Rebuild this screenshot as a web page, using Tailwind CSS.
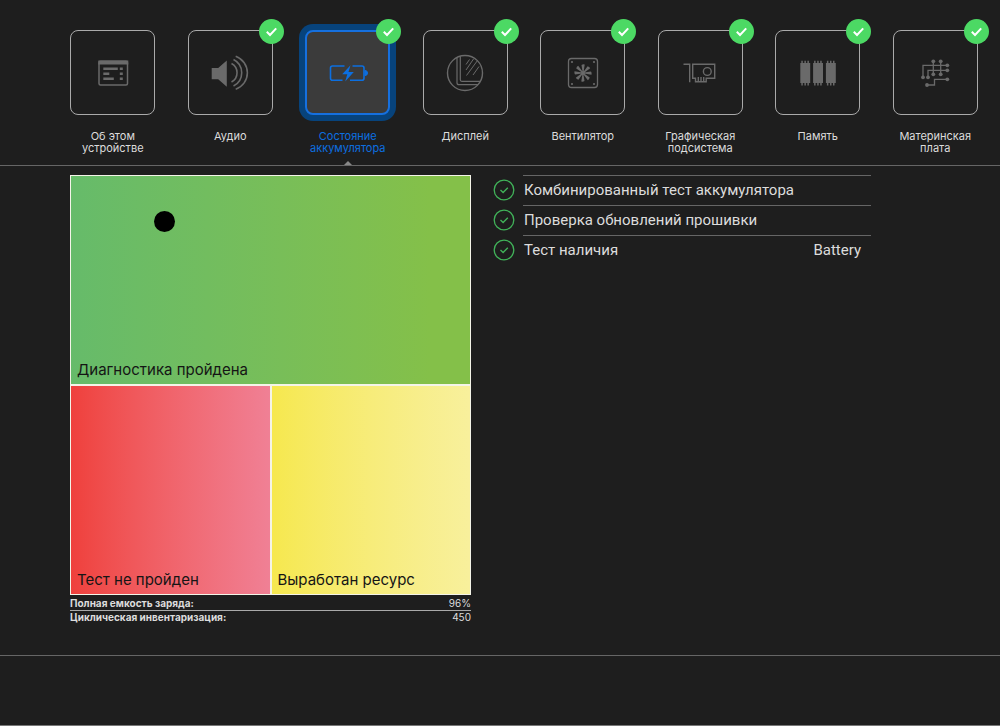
<!DOCTYPE html>
<html lang="ru">
<head>
<meta charset="utf-8">
<meta name="viewport" content="width=device-width, initial-scale=1">
<title>Состояние аккумулятора</title>
<script src="https://cdn.jsdelivr.net/npm/@tailwindcss/browser@4"></script>
</head>
<body class="min-h-screen flex flex-col bg-[#1e1e1e] text-[#dcdcdc] font-['Inter','Noto_Sans',sans-serif] border-b border-[#777]">
<svg class="hidden" aria-hidden="true">
  <symbol id="badge" viewBox="0 0 25 25"><circle cx="12.500" cy="12.500" r="12.500" fill="#4cd964"/><path d="M7.800 12.800l3.200 3.200 6.200-6.600" fill="none" stroke="#fff" stroke-width="2"/></symbol>
  <symbol id="ok" viewBox="0 0 22 22"><circle cx="11" cy="11" r="9.800" fill="none" stroke="#41b259" stroke-width="1.300"/><path d="M7.500 11l2.600 2.500 4.700-4.700" fill="none" stroke="#41b259" stroke-width="1.400"/></symbol>
</svg>

<nav class="flex pl-[54px] pr-[6px] pt-[30px] h-[166px] border-b border-[#666] text-[11px] leading-3 text-center" aria-label="Компоненты">
  <button class="flex-1 flex flex-col items-center">
    <span class="relative size-[85px] shrink-0 rounded-lg border border-[#aaa] flex items-center justify-center text-[#6a6a6a]">
      <svg class="size-10" viewBox="0 0 40 40" fill="none" stroke="currentColor" stroke-width="1.500"><rect x="6" y="8.200" width="28.500" height="23.800" rx="1.500"/><path d="M5.300 7.500h30v4h-30z" fill="currentColor" stroke="none"/><path d="M10.300 15.700h14.500M10.300 20.700h6M10.300 25.700h10.500M26.800 15.700h3M26.800 20.700h3M26.800 25.700h3" stroke-width="2.400"/></svg>
    </span>
    <span class="mt-[15px]">Об этом<br>устройстве</span>
  </button>
  <button class="flex-1 flex flex-col items-center">
    <span class="relative size-[85px] shrink-0 rounded-lg border border-[#aaa] flex items-center justify-center text-[#6a6a6a]">
      <svg class="size-10" viewBox="0 0 40 40" fill="none" stroke="currentColor" stroke-width="1.600"><path d="M1.700 15h6.500l8.600-7.500v26.300l-8.600-7.600H1.700z" fill="currentColor" stroke="none"/><path d="M21.500 10.500a10.500 10.500 0 0 1 0 18.500M23.500 6.500a14.800 14.800 0 0 1 0 26.500M25.700 3.300a17.500 17.500 0 0 1 0 33"/></svg>
      <svg class="absolute -top-3 -right-3 size-[25px]"><use href="#badge"/></svg>
    </span>
    <span class="mt-[15px]">Аудио</span>
  </button>
  <button class="relative flex-1 flex flex-col items-center text-[#0c6fe0]" aria-current="page">
    <span class="relative size-[85px] shrink-0 rounded-lg border-2 border-[#1670df] bg-[#3b3b3b] ring-6 ring-[#07437c] flex items-center justify-center">
      <svg class="size-10" viewBox="0 0 40 40" fill="none" stroke="currentColor" stroke-width="1.600"><path d="M16.500 13H4.500a2 2 0 0 0-2 2v10.300a2 2 0 0 0 2 2h10M24.500 13H34a2 2 0 0 1 2 2v10.300a2 2 0 0 1-2 2H22"/><path d="M37 17.500a2.500 2.500 0 0 1 0 5z" fill="currentColor" stroke-width="1"/><path d="M22.500 12.300l-8.300 9h5.100l-2.100 7.200 8.600-9.500h-5.300z" fill="currentColor" stroke="none"/></svg>
      <svg class="absolute -top-[13px] -right-[13px] size-[25px]"><use href="#badge"/></svg>
    </span>
    <span class="mt-[15px]">Состояние<br>аккумулятора</span>
    <svg class="absolute bottom-0 w-2 h-1" viewBox="0 0 8 4"><path d="M0 4l4-4 4 4z" fill="#888"/></svg>
  </button>
  <button class="flex-1 flex flex-col items-center">
    <span class="relative size-[85px] shrink-0 rounded-lg border border-[#aaa] flex items-center justify-center text-[#6a6a6a]">
      <svg class="size-10" viewBox="0 0 40 40" fill="none" stroke="currentColor" stroke-width="1.400"><circle cx="20" cy="20" r="17.500"/><path d="M12 4.500v25.200a2 2 0 0 0 2 2h19M15.300 3.500v23.300a1.500 1.500 0 0 0 1.500 1.500H35.500" stroke-width="1.200"/><path d="M21 11.500l3.500-5M21 17l7.500-11M21.500 22.500l11-15M28 22l6-8.500" stroke-width="1"/></svg>
      <svg class="absolute -top-3 -right-3 size-[25px]"><use href="#badge"/></svg>
    </span>
    <span class="mt-[15px]">Дисплей</span>
  </button>
  <button class="flex-1 flex flex-col items-center">
    <span class="relative size-[85px] shrink-0 rounded-lg border border-[#aaa] flex items-center justify-center text-[#6a6a6a]">
      <svg class="size-10" viewBox="0 0 40 40" fill="none" stroke="currentColor" stroke-width="1.300"><rect x="5.500" y="5.500" width="29" height="29" rx="3"/><g fill="currentColor" stroke="none"><circle cx="9" cy="9" r="1.100"/><circle cx="31" cy="9" r="1.100"/><circle cx="9" cy="31" r="1.100"/><circle cx="31" cy="31" r="1.100"/><circle cx="20" cy="20" r="2"/><path id="blade" d="M19.600 19l-1.100-7q1.500-1 3.200-.5L20.600 19z"/><use href="#blade" transform="rotate(45 20 20)"/><use href="#blade" transform="rotate(90 20 20)"/><use href="#blade" transform="rotate(135 20 20)"/><use href="#blade" transform="rotate(180 20 20)"/><use href="#blade" transform="rotate(225 20 20)"/><use href="#blade" transform="rotate(270 20 20)"/><use href="#blade" transform="rotate(315 20 20)"/></g></svg>
      <svg class="absolute -top-3 -right-3 size-[25px]"><use href="#badge"/></svg>
    </span>
    <span class="mt-[15px]">Вентилятор</span>
  </button>
  <button class="flex-1 flex flex-col items-center">
    <span class="relative size-[85px] shrink-0 rounded-lg border border-[#aaa] flex items-center justify-center text-[#6a6a6a]">
      <svg class="size-10" viewBox="0 0 40 40" fill="none" stroke="currentColor" stroke-width="1.400"><path d="M3.500 11.300h6.200v18M12.700 11.300h22v14h-8.500v3.500H15.500v-3.500h-2.800zM18.300 24v4.500M21 24v4.500M23.700 24v4.500"/><circle cx="27.300" cy="18.500" r="3.900"/></svg>
      <svg class="absolute -top-3 -right-3 size-[25px]"><use href="#badge"/></svg>
    </span>
    <span class="mt-[15px]">Графическая<br>подсистема</span>
  </button>
  <button class="flex-1 flex flex-col items-center">
    <span class="relative size-[85px] shrink-0 rounded-lg border border-[#aaa] flex items-center justify-center text-[#6a6a6a]">
      <svg class="size-10" viewBox="0 0 40 40" fill="currentColor"><path id="ram" d="M2.300 10h1V7.700h1.500V10h1.600V7.700h1.500V10h1.500V7.700h1.500V10h1.300v20h-1.300v2.500H9.400V30H7.900v2.500H6.400V30H4.800v2.500H3.300V30h-1z"/><use href="#ram" x="12.800"/><use href="#ram" x="25.600"/></svg>
      <svg class="absolute -top-3 -right-3 size-[25px]"><use href="#badge"/></svg>
    </span>
    <span class="mt-[15px]">Память</span>
  </button>
  <button class="flex-1 flex flex-col items-center">
    <span class="relative size-[85px] shrink-0 rounded-lg border border-[#aaa] flex items-center justify-center text-[#6a6a6a]">
      <svg class="size-10" viewBox="0 0 40 40" fill="none" stroke="currentColor" stroke-width="1.300"><path d="M8 24.300v-12h24.300M13 24.300v-7h19.300M18.300 8.300v13M25.700 8.300v13M12 32h7.500v-5.700h12.800"/><g fill="currentColor" stroke="none"><circle cx="18.300" cy="8.300" r="1.900"/><circle cx="25.700" cy="8.300" r="1.900"/><circle cx="32.300" cy="12.300" r="1.900"/><circle cx="32.300" cy="17.300" r="1.900"/><circle cx="32.300" cy="26.300" r="1.900"/><circle cx="8" cy="24.300" r="1.900"/><circle cx="13" cy="24.300" r="1.900"/><circle cx="18.300" cy="21.300" r="1.900"/><circle cx="25.700" cy="21.300" r="1.900"/><circle cx="12" cy="32" r="1.900"/></g></svg>
      <svg class="absolute -top-3 -right-3 size-[25px]"><use href="#badge"/></svg>
    </span>
    <span class="mt-[15px]">Материнская<br>плата</span>
  </button>
</nav>

<main class="grow grid grid-cols-[401fr_378fr] gap-x-[22px] items-start pl-[70px] pr-[129px] pt-[9px]">
  <section>
    <div class="relative grid grid-cols-2 grid-rows-[208px_208px] gap-0.5 p-px bg-[#f4f4e8] text-[15px] leading-5 text-[#151515]">
      <div class="col-span-2 flex items-end px-1.5 pb-1 bg-linear-to-r from-[#66bb6a] to-[#84c049] to-90%">Диагностика пройдена</div>
      <div class="flex items-end px-1.5 pb-1 bg-linear-to-r from-[#ef403c] to-[#f08095]">Тест не пройден</div>
      <div class="flex items-end px-1.5 pb-1 bg-linear-to-r from-[#f6e84e] to-[#f8f09c]">Выработан ресурс</div>
      <span class="absolute left-[21%] top-[36px] size-[21px] rounded-full bg-black"></span>
    </div>
    <table class="w-full mt-0.5 text-[10px] leading-[13px]">
      <tr class="border-b border-[#aaa]"><th scope="row" class="p-0 text-left font-bold">Полная емкость заряда:</th><td class="p-0 text-right">96%</td></tr>
      <tr><th scope="row" class="p-0 text-left font-bold">Циклическая инвентаризация:</th><td class="p-0 text-right">450</td></tr>
    </table>
  </section>
  <ul class="font-['Roboto','Noto_Sans',sans-serif] text-[15px] leading-[29px]">
    <li class="flex items-center gap-2"><svg class="size-[22px] shrink-0"><use href="#ok"/></svg><span class="grow border-t border-[#666] px-px">Комбинированный тест аккумулятора</span></li>
    <li class="flex items-center gap-2"><svg class="size-[22px] shrink-0"><use href="#ok"/></svg><span class="grow border-t border-[#666] px-px">Проверка обновлений прошивки</span></li>
    <li class="flex items-center gap-2"><svg class="size-[22px] shrink-0"><use href="#ok"/></svg><span class="grow flex justify-between border-t border-[#666] pl-px pr-2.5"><span>Тест наличия</span><span>Battery</span></span></li>
  </ul>
</main>
<footer class="h-[70px] border-t border-[#666]"></footer>
</body>
</html>
